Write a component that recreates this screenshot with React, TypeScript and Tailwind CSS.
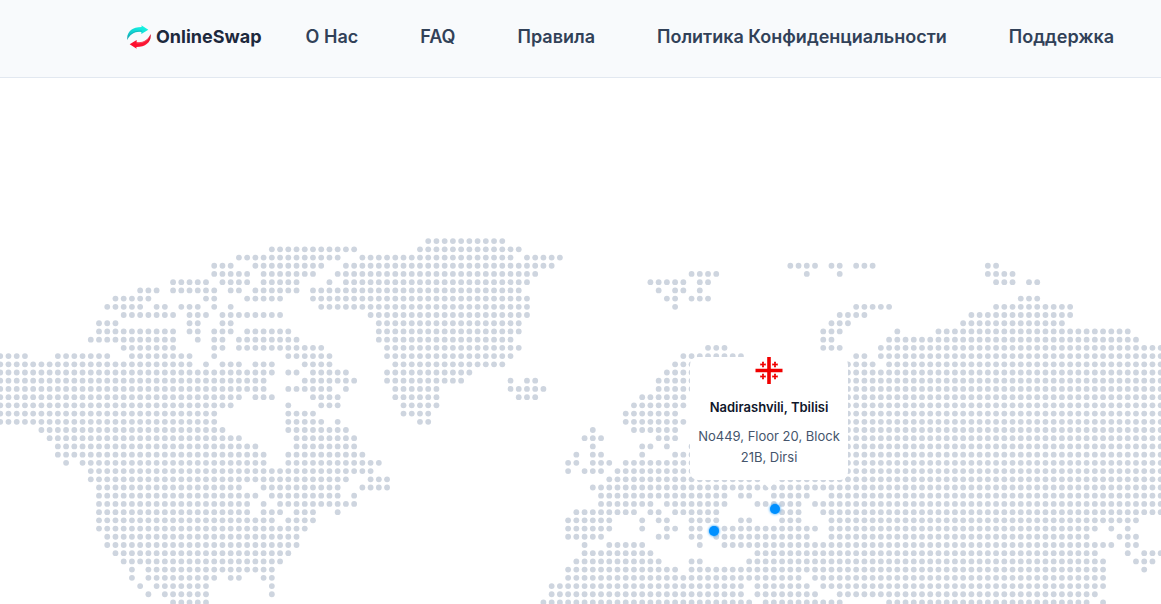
const NAV_LINKS = ['О Нас', 'FAQ', 'Правила', 'Политика Конфиденциальности', 'Поддержка'];

const MAP_WIDTH = 1161;
const MAP_HEIGHT = 370;
const STEP_X = 8.23;
const STEP_Y = 8.213;

// One line per row of dots, each entry is a column or a "from-to" run of columns
const LAND_ROWS = [
    '52-61',
    '33-43 51-63',
    '29-41 44-62 64-68',
    '26-28 31-39 42-67 96-99 101-102 104-106 120-121',
    '26-30 32-38 41-65 84-87 98 102 120-123',
    '21-25 27-30 32-36 40 42-64 79-83 85-86 121-123 125-126',
    '17-19 21-26 28-29 31-36 38-63 80 82-83 85',
    '14-18 25-26 30-34 38-64 81-82 84-86 124-126',
    '13-17 19-20 22-24 26 28 39-64 82 104-108 121-130',
    '15-21 23-25 27-34 45-64 102-105 118-130',
    '12-14 23-24 27-28 46-63 101-103 117-129',
    '12-21 23-24 26-28 30-35 46-63 100-102 109 114-137',
    '11-21 24 26-27 29-36 46-62 100-101 108-138',
    '15-21 26-27 29-39 47-63 86-88 100-102 107-141',
    '0-3 7-13 16-23 26 35-40 47-62 83-90 104-105 107-141',
    '0-23 25 27-29 31-33 37-40 48-61 82-84 103-106 108-141',
    '0-33 35-36 38-42 47-57 81-84 103-141',
    '0-32 37-43 47-56 62 64-65 80-84 103-141',
    '0-32 35-40 42 48-53 62-66 80-84 103-141',
    '0-29 31-33 38-41 48-53 63-65 78-83 103-141',
    '0-28 35 39-41 49-53 77-83 103-141',
    '0-26 35-38 49-52 76-82 103-141',
    '0-26 35-39 41 51-52 76-83 103-141',
    '5-27 35-42 72 77-82 103-141',
    '6-29 36-43 71-73 80-82 103-141',
    '7-31 36-43 72 78-79 81 84 103-141',
    '7-32 35-44 70 72-73 78 82-84 103-141',
    '8 10-32 35-46 69-70 72-74 76-84 103-141',
    '11-45 69 71-73 75-84 103-141',
    '11-42 45-47 74-141',
    '12-29 32-41 44-47 72-141',
    '12-31 33-41 43 73-88 90-91 94-98 101-141',
    '12-30 32 34-43 73-79 81-88 92-97 99-141',
    '12-30 32-34 36-38 41 70-77 79-80 82-87 95-97 100-141',
    '12-33 35-38 69-74 78 80-81 84-87 90-91 95-97 101-138',
    '12-37 69-74 78 81-82 84-85 87-99 101-133 135 137',
    '13-36 69-73 80-81 84-85 87-98 101-132 136-138',
    '13-36 71 74-78 85 88-135 137-138',
    '14-35 71-79 92-133 137 139-141',
    '15-34 70-80 84-85 91-134 138-140',
    '16 18-33 69-82 84-134 139',
    '16 18-26 28-29 32-33 69-97 99-134',
    '17 19-25 33 67-90 92-98 100-134',
    '18 20-25 33 67-90 92-99 102-133',
    '21-25 66-91 93-102 108-132 134',
];

const dots = LAND_ROWS.flatMap((row, rowIndex) =>
    row.split(' ').flatMap((run) => {
        const [from, to = from] = run.split('-').map(Number);
        return Array.from({ length: to - from + 1 }, (_, i) => ({
            x: 0.25 + (from + i) * STEP_X,
            y: 7.1 + rowIndex * STEP_Y,
        }));
    })
);

const PINS = [
    { id: 'tbilisi', label: 'Nadirashvili, Tbilisi', x: 775, y: 275 },
    { id: 'west', label: 'Office', x: 714, y: 297 },
];

const place = (x: number, y: number) => ({
    left: `${(x / MAP_WIDTH) * 100}%`,
    top: `${(y / MAP_HEIGHT) * 100}%`,
});

const Logo = () => (
    <svg viewBox="0 0 72 70" className="h-6 w-6 shrink-0" aria-hidden="true">
        <defs>
            <linearGradient id="swapTop" x1="0" y1="1" x2="0.6" y2="0">
                <stop offset="0" stopColor="#129ba6" />
                <stop offset="0.45" stopColor="#10cfd0" />
                <stop offset="1" stopColor="#17f3e2" />
            </linearGradient>
            <linearGradient id="swapBottom" x1="0" y1="1" x2="1" y2="0">
                <stop offset="0" stopColor="#ff0a2c" />
                <stop offset="0.6" stopColor="#fb1734" />
                <stop offset="1" stopColor="#d01834" />
            </linearGradient>
        </defs>
        <path d="M1 44C-2 21 14 5 44 5L43 0L64 13L43 26L43 20C24 17 9 26 1 44Z" fill="url(#swapTop)" />
        <path d="M3 39C8 24 24 14 45 16L43 20C24 17 10 27 3 39Z" fill="#0fa5ae" opacity="0.5" />
        <path d="M71 26C74 49 58 65 28 65L29 70L8 57L29 44L29 50C48 53 63 44 71 26Z" fill="url(#swapBottom)" />
        <path d="M69 31C64 46 48 56 27 54L29 50C48 53 62 43 69 31Z" fill="#ff7885" opacity="0.5" />
    </svg>
);

const GeorgiaFlag = () => (
    <svg viewBox="0 0 40 27" className="h-[27px] w-10" role="img" aria-label="Georgia">
        <rect width="40" height="27" fill="#fff" />
        <g fill="#f00000">
            <path d="M18.2 0h3.6v11.7h11.7v3.6H21.8V27h-3.6V15.3H6.5v-3.6h11.7z" />
            {[[14, 7.5], [26, 7.5], [14, 19.5], [26, 19.5]].map(([x, y]) => (
                <path
                    key={`${x}-${y}`}
                    transform={`translate(${x} ${y})`}
                    d="M-1-2.8h2L.8-.8l2-.2v2l-2-.2.2 2h-2l.2-2-2 .2v-2l2 .2z"
                />
            ))}
        </g>
    </svg>
);

const Header = () => (
    <header className="overflow-hidden border-b border-slate-200 bg-slate-50">
        <div className="flex h-[77px] items-center gap-11 whitespace-nowrap pb-1 pl-[127px] text-lg">
            <a href="#" className="flex items-center gap-[5px] font-bold text-slate-800">
                <Logo />
                OnlineSwap
            </a>
            <nav className="flex gap-[62px] font-semibold text-slate-700">
                {NAV_LINKS.map((link) => (
                    <a key={link} href="#">
                        {link}
                    </a>
                ))}
            </nav>
        </div>
    </header>
);

const LocationCard = () => (
    <div
        className="absolute flex w-[158px] flex-col items-center rounded-lg bg-white px-1.5 pb-3 text-center text-[13px]/[21px]"
        style={place(690, 123)}
    >
        <GeorgiaFlag />
        <h3 className="mt-[13px] font-semibold text-slate-900">Nadirashvili, Tbilisi</h3>
        <p className="mt-2 text-slate-600">No449, Floor 20, Block 21B, Dirsi</p>
        <span className="absolute -bottom-1.5 left-1/2 h-3 w-3 -translate-x-1/2 rotate-45 bg-white" />
    </div>
);

const WorldMap = () => (
    <section className="relative mt-[156px] overflow-hidden">
        <svg viewBox={`0 0 ${MAP_WIDTH} ${MAP_HEIGHT}`} className="block h-auto w-full" aria-hidden="true">
            <g fill="#ced5df">
                {dots.map(({ x, y }) => (
                    <circle key={`${x}-${y}`} cx={x} cy={y} r="2.9" />
                ))}
            </g>
        </svg>
        <LocationCard />
        {PINS.map((pin) => (
            <button
                key={pin.id}
                type="button"
                aria-label={pin.label}
                className="absolute h-2.5 w-2.5 -translate-x-1/2 -translate-y-1/2 rounded-full bg-[#0090ff] shadow-[0_0_3px_#0090ff]"
                style={place(pin.x, pin.y)}
            />
        ))}
    </section>
);

export default function App() {
    return (
        <div className="min-h-screen bg-white font-['Inter','Liberation_Sans',sans-serif]">
            <Header />
            <main>
                <WorldMap />
            </main>
        </div>
    );
}
